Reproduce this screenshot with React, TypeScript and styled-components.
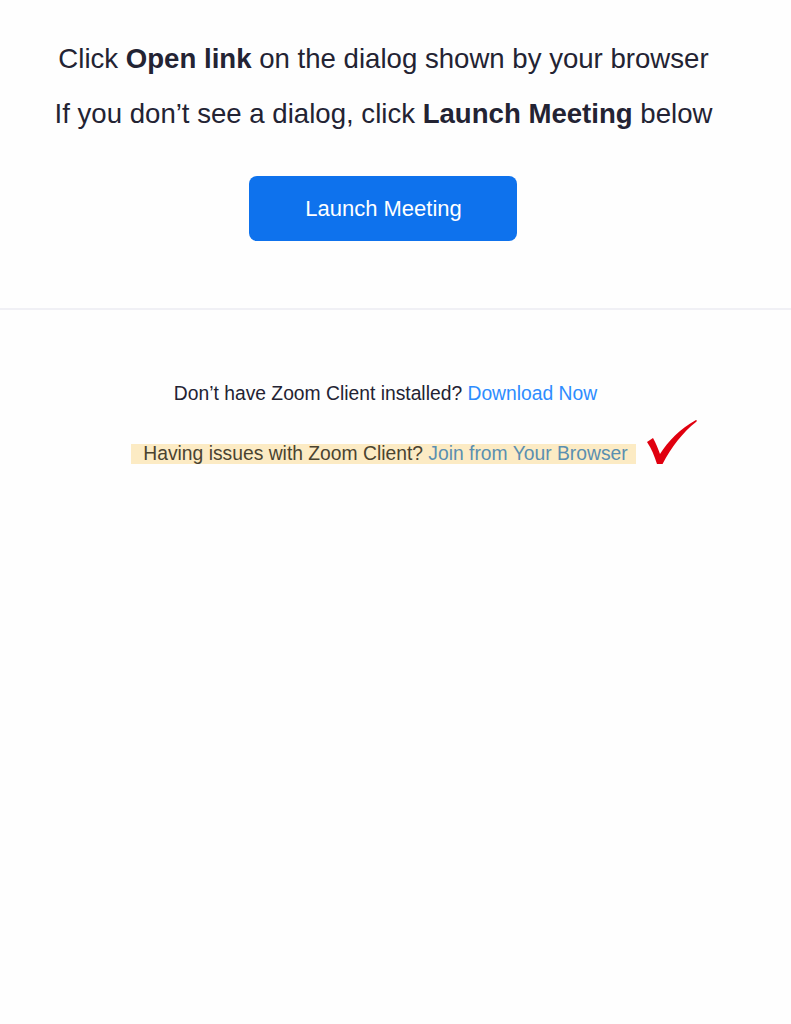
import React from 'react'
import styled, { createGlobalStyle } from 'styled-components'

const GlobalStyle = createGlobalStyle`
	body {
		margin: 0;
		background: #fefefe;
		font-family: 'Liberation Sans', Arial, sans-serif;
	}
`

const Page = styled.div`
	width: 767px;
	display: flex;
	flex-direction: column;
	align-items: center;
`

const Top = styled.section`
	display: flex;
	flex-direction: column;
	align-items: center;
	padding-top: 42px;
	padding-bottom: 67px;
`

const Line = styled.p<{ gap?: number }>`
	margin: 0;
	margin-top: ${props => props.gap || 0}px;
	font-size: 27.6px;
	line-height: 34px;
	color: #232333;
	white-space: nowrap;
`

const LaunchButton = styled.button`
	margin-top: 45px;
	width: 268px;
	height: 65px;
	border: none;
	border-radius: 8px;
	background: #0e72ed;
	color: #fff;
	font-family: inherit;
	font-size: 22px;
	cursor: pointer;
`

const Divider = styled.hr`
	margin: 0;
	width: 791px;
	align-self: flex-start;
	border: none;
	border-top: 2px solid #f0f0f5;
`

const Bottom = styled.section`
	display: flex;
	flex-direction: column;
	align-items: center;
	padding-top: 74px;
`

const Hint = styled.div<{ highlight?: boolean }>`
	font-size: 19.3px;
	line-height: 20px;
	color: ${props => (props.highlight ? '#4a4330' : '#232333')};
	background: ${props => (props.highlight ? '#fcebc4' : 'transparent')};
	padding: 0 8px 0 12px;
	white-space: nowrap;
`

const Link = styled.a<{ muted?: boolean }>`
	color: ${props => (props.muted ? '#5a8fb0' : '#2d8cff')};
	text-decoration: none;
	cursor: pointer;
`

const HintRow = styled.div`
	position: relative;
	margin-top: 40px;
`

const Check = styled.svg`
	position: absolute;
	left: calc(100% + 10px);
	top: -25px;
`

export default function App() {
	return (
		<Page>
			<GlobalStyle />
			<Top>
				<Line>
					Click <b>Open link</b> on the dialog shown by your browser
				</Line>
				<Line gap={21}>
					If you don’t see a dialog, click <b>Launch Meeting</b> below
				</Line>
				<LaunchButton>Launch Meeting</LaunchButton>
			</Top>
			<Divider />
			<Bottom>
				<Hint>
					Don’t have Zoom Client installed? <Link>Download Now</Link>
				</Hint>
				<HintRow>
					<Hint highlight>
						Having issues with Zoom Client? <Link muted>Join from Your Browser</Link>
					</Hint>
					<Check width="52" height="50" viewBox="0 0 52 50">
						<path
							d="M1 23 L7 19 C10 24 12 30 14 35 C22 22 34 10 50 1 C51 1 51 2 50 3 C36 14 24 30 15 48 L12 48 C9 39 6 30 1 23 Z"
							fill="#e0000f"
						/>
					</Check>
				</HintRow>
			</Bottom>
		</Page>
	)
}
